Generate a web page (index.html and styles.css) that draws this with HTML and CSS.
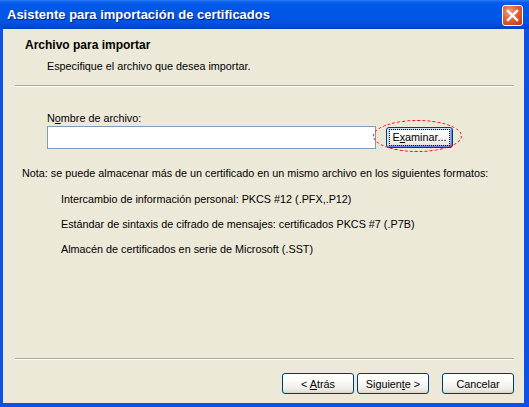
FILE: index.html
```html
<!DOCTYPE html>
<html lang="es">
<head>
<meta charset="utf-8">
<title>Asistente para importación de certificados</title>
<link rel="stylesheet" href="styles.css">
</head>
<body>
<div class="window">
  <div class="titlebar">
    <span class="title">Asistente para importación de certificados</span>
    <button class="close" aria-label="Cerrar">
      <svg width="13" height="13" viewBox="0 0 13 13"><path d="M2 2 L11 11 M11 2 L2 11" stroke="#fff" stroke-width="2.4" stroke-linecap="square"/></svg>
    </button>
  </div>
  <div class="body">
    <div class="header">
      <div class="h-title">Archivo para importar</div>
      <div class="h-sub">Especifique el archivo que desea importar.</div>
    </div>
    <div class="sep"></div>
    <div class="content">
      <div class="label">N<u>o</u>mbre de archivo:</div>
      <div class="file-row">
        <input class="file" type="text">
        <span class="browse-wrap">
          <button class="btn btn-browse"><span class="focus-rect">E<u>x</u>aminar...</span></button>
          <span class="ellipse"></span>
        </span>
      </div>
      <div class="note">Nota: se puede almacenar más de un certificado en un mismo archivo en los siguientes formatos:</div>
      <div class="formats">
        <div>Intercambio de información personal: PKCS #12 (.PFX,.P12)</div>
        <div>Estándar de sintaxis de cifrado de mensajes: certificados PKCS #7 (.P7B)</div>
        <div>Almacén de certificados en serie de Microsoft (.SST)</div>
      </div>
    </div>
    <div class="sep"></div>
    <div class="footer">
      <button class="btn"><span>&lt; <u>A</u>trás</span></button>
      <button class="btn"><span>Siguien<u>t</u>e &gt;</span></button>
      <button class="btn btn-cancel"><span>Cancelar</span></button>
    </div>
  </div>
</div>
</body>
</html>
```

FILE: styles.css
```css
html, body {
  margin: 0;
  padding: 0;
  background: #ECE9D8;
}
body {
  font-family: "Liberation Sans", Arial, sans-serif;
  font-size: 10.8px;
  color: #000;
}
.window {
  width: 529px;
  height: 407px;
  display: flex;
  flex-direction: column;
  overflow: hidden;
}
.titlebar {
  height: 29px;
  flex: none;
  display: flex;
  align-items: center;
  padding: 0 6px 0 7px;
  background: linear-gradient(#2E7BF7 0px, #0A5FEB 2px, #0058E8 6px, #0056E6 16px, #0052E0 23px, #0047D0 27px, #003DC0 29px);
}
.title {
  flex: 1;
  color: #fff;
  font-weight: bold;
  font-size: 13px;
  line-height: 16px;
  text-shadow: 1px 1px 0 #0A1E6E;
  padding-top: 1px;
}
.close {
  width: 21px;
  height: 21px;
  padding: 0;
  margin-top: 1px;
  border: 1px solid #fff;
  border-radius: 3px;
  background: radial-gradient(circle at 35% 30%, #F29C7E 0%, #E2603A 45%, #C9441C 80%, #B5381A 100%);
  display: flex;
  align-items: center;
  justify-content: center;
}
.body {
  flex: 1;
  display: flex;
  flex-direction: column;
  background: #ECE9D8;
  border-left: 3px solid #0D52E6;
  border-right: 5px solid #0D52E6;
  border-bottom: 4px solid #0D52E6;
}
.header {
  padding: 9px 0 0 22px;
  height: 47px;
}
.h-title {
  font-weight: bold;
  font-size: 12px;
  line-height: 14px;
  margin-bottom: 8px;
}
.h-sub {
  line-height: 13px;
  padding-left: 22px;
}
.sep {
  flex: none;
  height: 0;
  margin: 0 10px 0 12px;
  border-top: 1px solid #ACA899;
  border-bottom: 1px solid #FFFFFF;
}
.content {
  flex: 1;
  padding: 25px 0 0 19px;
}
.label {
  line-height: 13px;
  padding-left: 25px;
}
.file-row {
  display: flex;
  align-items: center;
  margin-top: 1px;
  padding-left: 25px;
}
.file {
  box-sizing: border-box;
  width: 329px;
  height: 23px;
  margin: 0;
  border: 1px solid #7F9DB9;
  background: #fff;
  outline: none;
}
.browse-wrap {
  position: relative;
  margin-left: 10px;
  display: inline-flex;
}
.btn {
  box-sizing: border-box;
  width: 72px;
  height: 21px;
  padding: 0;
  font-family: "Liberation Sans", Arial, sans-serif;
  font-size: 10.8px;
  color: #000;
  border: 1px solid #003C74;
  border-radius: 3px;
  background: linear-gradient(#FFFFFF 0%, #FBFBF9 35%, #F1F0EA 70%, #E6E4DB 90%, #D8D3C7 100%);
  display: inline-flex;
  align-items: center;
  justify-content: center;
}
.btn-browse {
  width: 67px;
  height: 21px;
  box-shadow: inset 1px 1px 0 #CEE7FF, inset -1px -1px 0 #6982EE, inset 2px 2px 0 #BCD4F6, inset -2px -2px 0 #89ADE4;
}
.focus-rect {
  outline: 1px dotted #000;
  outline-offset: 1px;
  padding: 0 1px;
  line-height: 13px;
}
.ellipse {
  position: absolute;
  left: -13px;
  top: -7px;
  width: 89px;
  height: 32px;
  box-sizing: border-box;
  border: 1.5px dashed #F00;
  border-radius: 50%;
  pointer-events: none;
}
.note {
  margin-top: 18px;
  line-height: 13px;
}
.formats {
  display: flex;
  flex-direction: column;
  gap: 12.3px;
  margin-top: 12.7px;
  padding-left: 39px;
  line-height: 13px;
}
.footer {
  flex: none;
  display: flex;
  justify-content: flex-end;
  padding: 13px 10px 9px 0;
}
.footer .btn + .btn {
  margin-left: 3px;
}
.footer .btn-cancel {
  margin-left: 13px !important;
}
u {
  text-decoration: underline;
  text-underline-offset: 1px;
}
```
